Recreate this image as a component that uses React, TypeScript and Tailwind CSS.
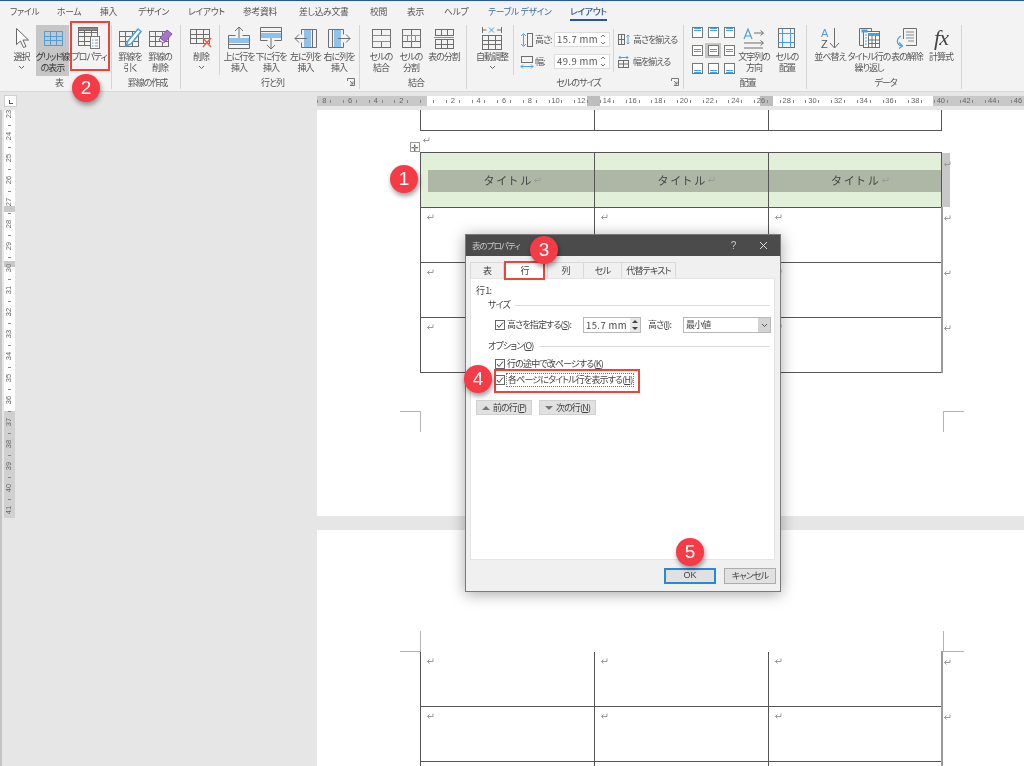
import type { ReactNode } from 'react'

const G = '#6e6e6e'
const B = '#4a9fdc'

function Ic({ w = 30, h = 26, children }: { w?: number; h?: number; children: ReactNode }) {
  return (
    <svg width={w} height={h} viewBox={`0 0 ${w} ${h}`} fill="none" stroke={G} strokeWidth={1} className="block">
      {children}
    </svg>
  )
}

// small table drawing used by most of the ribbon icons
function Lines({ x, y, w, h, cols = 3, rows = 3, stroke = G }: { x: number; y: number; w: number; h: number; cols?: number; rows?: number; stroke?: string }) {
  const parts = []
  for (let i = 1; i < cols; i++) {
    const cx = Math.round(x + (w * i) / cols) + 0.5
    parts.push(<line key={'c' + i} x1={cx} y1={y} x2={cx} y2={y + h} />)
  }
  for (let i = 1; i < rows; i++) {
    const cy = Math.round(y + (h * i) / rows) + 0.5
    parts.push(<line key={'r' + i} x1={x} y1={cy} x2={x + w} y2={cy} />)
  }
  return (
    <g stroke={stroke}>
      <rect x={x + 0.5} y={y + 0.5} width={w} height={h} />
      {parts}
    </g>
  )
}

const icons = {
  select: (
    <Ic w={20} h={24}>
      <path d="M4.500 2.500v16l4-3.500 3 6.500 2.500-1-3-6.500h5.500z" fill="#fff" stroke="#666" />
    </Ic>
  ),
  grid: (
    <Ic w={22} h={20}>
      <Lines x={2} y={3} w={18} h={14} cols={3} rows={3} stroke={B} />
    </Ic>
  ),
  props: (
    <Ic w={26} h={26}>
      <Lines x={2} y={2} w={19} h={18} cols={3} rows={4} />
      <rect x="2.500" y="2.500" width="19" height="3" fill="#8a8a8a" />
      <rect x="14.500" y="11.500" width="9" height="12" fill="#fff" stroke="#777" />
      <path d="M16 15h1.500M16 18h1.500M16 21h1.500" stroke={B} />
      <path d="M19 15h3M19 18h3M19 21h3" stroke="#888" />
    </Ic>
  ),
  draw: (
    <Ic w={26} h={24}>
      <Lines x={2} y={5} w={19} h={15} />
      <path d="M9 20l2-5L21 3l3 2.500L14 18z" fill="#fff" stroke={B} strokeWidth={1.5} />
    </Ic>
  ),
  erase: (
    <Ic w={26} h={24}>
      <Lines x={2} y={5} w={19} h={15} />
      <path d="M13 12l7-8 5 4-7 8z" fill="#a874c8" stroke="#8a55a8" />
      <path d="M13 12l-1 2 4 3 2-1z" fill="#fff" stroke="#8a55a8" />
    </Ic>
  ),
  del: (
    <Ic w={26} h={24}>
      <Lines x={2} y={3} w={19} h={14} />
      <path d="M15 12l8 9M23 12l-8 9" stroke="#e8604c" strokeWidth={1.4} />
    </Ic>
  ),
  above: (
    <Ic w={26} h={26}>
      <path d="M2.500 10.500h7M16.500 10.500h7M2.500 10.500v13h21v-13M2.500 19.500h21" />
      <rect x="3" y="13" width="20" height="5" fill="#8ec2ea" stroke="none" />
      <path d="M13 13V2M9 6l4-4 4 4" />
    </Ic>
  ),
  below: (
    <Ic w={26} h={26}>
      <path d="M2.500 15.500h7M16.500 15.500h7M2.500 15.500v-13h21v13M2.500 6.500h21" />
      <rect x="3" y="8" width="20" height="5" fill="#8ec2ea" stroke="none" />
      <path d="M13 13v11M9 20l4 4 4-4" />
    </Ic>
  ),
  left: (
    <Ic w={26} h={26}>
      <path d="M8.500 4.500h15v18h-15M19.500 4.500v18M8.500 4.500v5M8.500 17.500v5" />
      <rect x="11" y="5" width="7" height="17" fill="#8ec2ea" stroke="none" />
      <path d="M14 13.500H2M6 9.500l-4 4 4 4" />
    </Ic>
  ),
  right: (
    <Ic w={26} h={26}>
      <path d="M17.500 4.500h-15v18h15M6.500 4.500v18M17.500 4.500v5M17.500 17.500v5" />
      <rect x="8" y="5" width="7" height="17" fill="#8ec2ea" stroke="none" />
      <path d="M12 13.500h12M20 9.500l4 4-4 4" />
    </Ic>
  ),
  merge: (
    <Ic w={22} h={22}>
      <rect x="2.500" y="2.500" width="18" height="18" />
      <path d="M11.500 2.500v6M11.500 14.500v6" />
      <path d="M2.500 8.500h18M2.500 14.500h18" stroke={B} />
    </Ic>
  ),
  split: (
    <Ic w={22} h={22}>
      <rect x="2.500" y="2.500" width="18" height="18" />
      <path d="M11.500 2.500v18M2.500 14.500h18" />
      <path d="M2.500 8.500h18M7.500 8.500v6M11.500 8.500v6M15.500 8.500v6" stroke={B} />
    </Ic>
  ),
  splitTable: (
    <Ic w={22} h={22}>
      <Lines x={2} y={2} w={18} h={6} cols={3} rows={1} />
      <Lines x={2} y={12} w={18} h={9} cols={3} rows={2} />
      <path d="M1 10.500h20" stroke={B} />
    </Ic>
  ),
  autofit: (
    <Ic w={24} h={24}>
      <path d="M2.500 1v6M21.500 1v6M2.500 4h4M17 4h4" />
      <path d="M9 1.500l5 5M14 1.500l-5 5" stroke={B} />
      <Lines x={2} y={9} w={19} h={14} cols={3} rows={3} />
    </Ic>
  ),
  textDir: (
    <Ic w={24} h={24}>
      <path d="M2 13l4-10 4 10M3.500 10h5" stroke={B} strokeWidth={1.2} />
      <path d="M12 7h9M18.500 4.500l3 2.500-3 2.500M2 17h19M18.500 14.500l3 2.500-3 2.500M2 22h19" />
    </Ic>
  ),
  cellAlign: (
    <Ic w={22} h={24}>
      <rect x="2.500" y="2.500" width="16" height="19" />
      <path d="M6.500 2.500v19M14.500 2.500v19M2.500 7.500h16M2.500 16.500h16" stroke={B} />
    </Ic>
  ),
  sort: (
    <Ic w={24} h={24}>
      <text x="3" y="11" fontSize="11" fill={B} stroke="none" fontFamily="Liberation Sans">A</text>
      <text x="3" y="22" fontSize="11" fill="#555" stroke="none" fontFamily="Liberation Sans">Z</text>
      <path d="M16.500 2v20M12 17l4.500 5 4.500-5" />
    </Ic>
  ),
  repeat: (
    <Ic w={24} h={24}>
      <path d="M2.500 2.500h12v3M2.500 2.500v17h4" />
      <rect x="6.500" y="5.500" width="16" height="16" fill="#fff" />
      <rect x="4.500" y="3.500" width="6" height="3" fill={B} stroke="none" />
      <rect x="11" y="7" width="11" height="3" fill={B} stroke="none" />
      <path d="M11.500 10v11M15 10v11M18.500 10v11M11 14h11M11 17.500h11" />
      <path d="M8 9h2M8 12h2M8 15h2M8 18h2" stroke={B} />
    </Ic>
  ),
  convert: (
    <Ic w={24} h={24}>
      <path d="M8.500 13V2.500h13v17H11" />
      <path d="M11 6h8M11 9h8M11 12h8M13 15h6" stroke="#888" />
      <path d="M6 10c-5 3-5 9 1 10M4 16.500l3.500 3.500-3.500 2.500" stroke={B} strokeWidth={1.2} />
    </Ic>
  ),
  fx: (
    <div className="w-[26px] h-[24px] text-[22px] leading-[24px] italic text-[#444] text-center [font-family:'Liberation_Serif',serif]">fx</div>
  ),
  height: (
    <Ic w={14} h={16}>
      <path d="M3.500 2.500v11M1 4l2.500-2.500L6 4M1 12l2.500 2.500L6 12" stroke={B} />
      <rect x="7.500" y="1.500" width="5" height="13" />
    </Ic>
  ),
  width: (
    <Ic w={14} h={16}>
      <rect x="1.500" y="2.500" width="11" height="6" />
      <path d="M1 12.500h12M3 10.500l-2 2 2 2M11 10.500l2 2-2 2" stroke={B} />
    </Ic>
  ),
  sameH: (
    <Ic w={12} h={12}>
      <rect x="0.500" y="0.500" width="6" height="10" />
      <path d="M0.500 5.500h6M3.500 0.500v10" />
      <path d="M10 1v9M8.500 2.500l1.500-1.500 1.500 1.500M8.500 8.500l1.500 1.500 1.500-1.500" stroke={B} />
    </Ic>
  ),
  sameW: (
    <Ic w={12} h={12}>
      <rect x="0.500" y="4.500" width="10" height="7" />
      <path d="M5.500 4.500v7M0.500 8h10" />
      <path d="M1 1.500h9M2.500 0l-1.500 1.500 1.500 1.500M8.500 0l1.500 1.500-1.500 1.500" stroke={B} />
    </Ic>
  ),
}

function Btn({ icon, lines, className, chevron }: { icon: ReactNode; lines: string[]; className: string; chevron?: boolean }) {
  return (
    <div className={`flex flex-col items-center ${className}`}>
      <div className="h-[26px] flex items-center justify-center">{icon}</div>
      <div className="text-center leading-[11px] whitespace-nowrap">
        {lines.map((l) => (
          <div key={l}>{l}</div>
        ))}
      </div>
      {chevron && (
        <svg width="7" height="5" viewBox="0 0 7 5" fill="none" stroke="#666" className="mt-[3px]">
          <path d="M1 1l2.500 2.500L6 1" />
        </svg>
      )}
    </div>
  )
}

function Launcher() {
  return (
    <svg width="8" height="8" viewBox="0 0 8 8" fill="none" stroke="#777" className="absolute right-[4px] bottom-[3px]">
      <path d="M0.500 3V0.500H7.500V7.500H3M3 3l3 3M6 3.500V6H3.500" />
    </svg>
  )
}

function Group({ label, className, children, launcher }: { label: string; className: string; children: ReactNode; launcher?: boolean }) {
  return (
    <div className={`relative flex flex-col h-[64px] border-r border-[#d4d4d4] ${className}`}>
      <div className="flex-1 flex items-start">{children}</div>
      <div className="text-center leading-[12px] text-[#555]">{label}</div>
      {launcher && <Launcher />}
    </div>
  )
}

function Spin({ value }: { value: string }) {
  return (
    <div className="w-[56px] h-[15px] bg-white border border-[#dcdcdc] flex items-center text-[9.500px] pl-[2px] text-[#555] tracking-[0.4px]">
      <span className="flex-1">{value}</span>
      <svg width="8" height="13" viewBox="0 0 8 13" fill="none" stroke="#777" className="mr-[2px]">
        <path d="M2 4l2-2 2 2M2 9l2 2 2-2" />
      </svg>
    </div>
  )
}

function AlignCell({ bar, active }: { bar: string; active?: boolean }) {
  return (
    <div className={`w-[16px] h-[15px] flex items-center justify-center ${active ? 'bg-[#c6c6c6]' : ''}`}>
      <div className={`w-[11px] h-[11px] border border-[#777] bg-white flex flex-col px-[1px] ${bar}`}>
        <div className="h-[1px] w-full bg-[#4a9fdc]" />
        <div className="h-[1px] w-full bg-[#4a9fdc] mt-[1px]" />
      </div>
    </div>
  )
}

function Ribbon() {
  return (
    <div className="h-[70px] bg-[#f3f3f3] flex pt-[3px] text-[9px] tracking-[-1px] text-[#555] border-b border-[#d8d8d8]">
      <Group label="表" className="w-[112px] pl-[7px]">
        <Btn className="w-[29px]" icon={icons.select} lines={['選択']} chevron />
        <div className="w-[33px] h-[51px] bg-[#c6c6c6] text-[#333]">
          <Btn className="w-full" icon={icons.grid} lines={['グリッド線', 'の表示']} />
        </div>
        <Btn className="w-[40px]" icon={icons.props} lines={['プロパティ']} />
      </Group>
      <Group label="罫線の作成" className="w-[69px] pl-[3px]">
        <Btn className="w-[30px]" icon={icons.draw} lines={['罫線を', '引く']} />
        <Btn className="w-[30px]" icon={icons.erase} lines={['罫線の', '削除']} />
      </Group>
      <Group label="行と列" className="w-[179px] pl-[5px]" launcher>
        <Btn className="w-[30px]" icon={icons.del} lines={['削除']} chevron />
        <div className="w-px h-[50px] bg-[#d4d4d4] mx-[3px]" />
        <Btn className="w-[32px]" icon={icons.above} lines={['上に行を', '挿入']} />
        <Btn className="w-[32px]" icon={icons.below} lines={['下に行を', '挿入']} />
        <Btn className="w-[37px]" icon={icons.left} lines={['左に列を', '挿入']} />
        <Btn className="w-[30px]" icon={icons.right} lines={['右に列を', '挿入']} />
      </Group>
      <Group label="結合" className="w-[107px] pl-[6px]">
        <Btn className="w-[30px]" icon={icons.merge} lines={['セルの', '結合']} />
        <Btn className="w-[30px]" icon={icons.split} lines={['セルの', '分割']} />
        <Btn className="w-[36px]" icon={icons.splitTable} lines={['表の分割']} />
      </Group>
      <Group label="セルのサイズ" className="w-[217px] pl-[7px]" launcher>
        <Btn className="w-[36px]" icon={icons.autofit} lines={['自動調整']} chevron />
        <div className="w-px h-[50px] bg-[#d4d4d4] mx-[3px]" />
        <div className="w-[96px] flex flex-col gap-[7px] pt-[7px] pl-[3px]">
          <div className="flex items-center h-[15px]">
            {icons.height}
            <span className="w-[20px] pl-[1px]">高さ:</span>
            <Spin value="15.7 mm" />
          </div>
          <div className="flex items-center h-[15px]">
            {icons.width}
            <span className="w-[20px] pl-[1px]">幅:</span>
            <Spin value="49.9 mm" />
          </div>
        </div>
        <div className="w-px h-[43px] bg-[#d4d4d4] mt-[4px]" />
        <div className="flex flex-col gap-[10px] pt-[9px] pl-[4px]">
          <div className="flex items-center h-[12px] gap-[3px] whitespace-nowrap">{icons.sameH}高さを揃える</div>
          <div className="flex items-center h-[12px] gap-[3px] whitespace-nowrap">{icons.sameW}幅を揃える</div>
        </div>
      </Group>
      <Group label="配置" className="w-[123px] pl-[5px]">
        <div className="grid grid-cols-3 gap-y-[3px] w-[48px]">
          <AlignCell bar="justify-start" />
          <AlignCell bar="justify-start items-center" />
          <AlignCell bar="justify-start items-end" />
          <AlignCell bar="justify-center" />
          <AlignCell bar="justify-center items-center" active />
          <AlignCell bar="justify-center items-end" />
          <AlignCell bar="justify-end" />
          <AlignCell bar="justify-end items-center" />
          <AlignCell bar="justify-end items-end" />
        </div>
        <Btn className="w-[34px]" icon={icons.textDir} lines={['文字列の', '方向']} />
        <Btn className="w-[32px]" icon={icons.cellAlign} lines={['セルの', '配置']} />
      </Group>
      <Group label="データ" className="w-[155px] pl-[3px]">
        <Btn className="w-[40px]" icon={icons.sort} lines={['並べ替え']} />
        <Btn className="w-[38px]" icon={icons.repeat} lines={['タイトル行の', '繰り返し']} />
        <Btn className="w-[38px]" icon={icons.convert} lines={['表の解除']} />
        <Btn className="w-[30px]" icon={icons.fx} lines={['計算式']} />
      </Group>
    </div>
  )
}

const tabs = [
  { label: 'ファイル', w: 'w-[47px]' },
  { label: 'ホーム', w: 'w-[43px]' },
  { label: '挿入', w: 'w-[38px]' },
  { label: 'デザイン', w: 'w-[50px]' },
  { label: 'レイアウト', w: 'w-[55px]' },
  { label: '参考資料', w: 'w-[56px]' },
  { label: '差し込み文書', w: 'w-[71px]' },
  { label: '校閲', w: 'w-[37px]' },
  { label: '表示', w: 'w-[37px]' },
  { label: 'ヘルプ', w: 'w-[44px]' },
]

function TabBar() {
  return (
    <div className="h-[21px] bg-[#f3f3f3] flex items-center pl-[10px] text-[8.800px] tracking-[-0.3px] text-[#555] whitespace-nowrap pt-[1px]">
      {tabs.map((t) => (
        <span key={t.label} className={t.w}>
          {t.label}
        </span>
      ))}
      <span className="w-[82px] text-[#3b6ea8]">テーブル デザイン</span>
      <span className="text-[#2b579a] font-medium border-b-2 border-[#2b579a] leading-[14px] mt-[2px]">レイアウト</span>
    </div>
  )
}

const rulerNums = [8, 6, 4, 2, 0, 2, 4, 6, 8, 10, 12, 14, 16, 18, 20, 22, 24, 26, 28, 30, 32, 34, 36, 38, 40, 42, 44, 46]

function HRuler() {
  return (
    <div className="h-[18px] bg-[#e6e6e6] flex items-center">
      <div className="ml-[4px] w-[13px] h-[12px] bg-white border border-[#d0d0d0] flex items-end justify-center pb-[2px]">
        <div className="w-[4px] h-[4px] border-l border-b border-[#555]" />
      </div>
      <div className="ml-[300px] relative flex-1 h-[10px] overflow-hidden flex">
        <div className="w-[110px] bg-[#c8c8c8]" />
        <div className="w-[160px] bg-white" />
        <div className="w-[13px] bg-[#bdbdbd]" />
        <div className="w-[160px] bg-white" />
        <div className="w-[13px] bg-[#bdbdbd]" />
        <div className="w-[160px] bg-white" />
        <div className="flex-1 bg-[#c8c8c8]" />
        <div className="absolute inset-0 flex -ml-[6px]">
          {rulerNums.map((n, i) => (
            <div key={i} className="w-[25.700px] shrink-0 flex items-center text-[7.500px] leading-none text-[#666] [font-family:'Liberation_Sans',sans-serif]">
              <span className="w-[6.400px]" />
              <span className="w-px h-[3px] bg-[#888]" />
              <span className="w-[11.900px] text-center">{n === 0 ? '' : n}</span>
              <span className="w-px h-[3px] bg-[#888]" />
            </div>
          ))}
        </div>
      </div>
    </div>
  )
}

const vNums = Array.from({ length: 19 }, (_, i) => 23 + i)

function VRuler() {
  return (
    <div className="relative ml-[2px] w-[11px] h-[408px] bg-white overflow-hidden">
      <div className="absolute left-0 right-0 top-[301px] bottom-0 bg-[#d0d0d0]" />
      <div className="absolute left-0 right-0 top-[96px] h-[6px] bg-[#c8c8c8]" />
      <div className="absolute left-0 right-0 top-[151px] h-[6px] bg-[#c8c8c8]" />
      <div className="relative -mt-[4px]">
        {vNums.map((n) => (
          <div key={n} className="h-[22px] flex flex-col items-center justify-between">
            <span className="-rotate-90 text-[7.500px] leading-[16px] h-[16px] text-[#666] [font-family:'Liberation_Sans',sans-serif]">{n}</span>
            <span className="w-[3px] h-px bg-[#888] mb-[2px]" />
          </div>
        ))}
      </div>
    </div>
  )
}

function Ret({ className = '' }: { className?: string }) {
  return (
    <svg width="8" height="7" viewBox="0 0 8 7" fill="none" stroke="#9a9a9a" className={className}>
      <path d="M7 0.500V3.500H1.500M3.500 1.500l-2 2 2 2" />
    </svg>
  )
}

const cellCols = 'grid grid-cols-[174px_174px_173px] w-[522px]'

// the thick grey end-of-row edge on the right of each table row
function RowEnd() {
  return <div className="absolute left-[520px] -top-px bottom-0 w-[2px] bg-[#9a9a9a]" />
}

function Row({ marks = true }: { marks?: boolean }) {
  return (
    <div className={`relative ${cellCols} border-l border-[#555] h-[55px]`}>
      {[0, 1, 2].map((i) => (
        <div key={i} className="border-b border-r border-[#555] pt-[6px] pl-[5px]">
          {marks && <Ret />}
        </div>
      ))}
      <RowEnd />
      <Ret className="absolute left-[522px] top-[7px]" />
    </div>
  )
}

function HeaderRow() {
  return (
    <div className={`relative ${cellCols} border-l border-[#555] h-[55px] bg-[#e2efd9]`}>
      <div className="absolute left-[7px] w-[513px] top-[17px] h-[22px] bg-[#aeb6a6]" />
      {[0, 1, 2].map((i) => (
        <div key={i} className="relative border-b border-r border-[#555] flex items-center justify-center pl-[10px] pt-[1px] text-[11px] tracking-[3px] text-[#444]">
          タイトル
          <Ret className="-ml-[1px]" />
        </div>
      ))}
      <div className="absolute left-[521px] top-0 w-[8px] h-[54px] bg-[#c8c8c8]" />
      <Ret className="absolute left-[522px] top-[8px]" />
    </div>
  )
}

function Crop({ className }: { className: string }) {
  return <div className={`w-[21px] h-[21px] border-[#b4b4b4] ${className}`} />
}

function Doc() {
  return (
    <div className="flex">
      <div className="w-[317px] shrink-0 border-l-2 border-[#c4c4c4]">
        <VRuler />
      </div>
      <div className="flex-1">
        <div className="h-[406px] bg-white pl-[103px]">
          <div className={`${cellCols} border-l border-[#555] h-[21px]`}>
            {[0, 1, 2].map((i) => (
              <div key={i} className="border-r border-b border-[#555]" />
            ))}
          </div>
          <div className="relative h-[21px] pl-[2px] pt-[6px]">
            <Ret />
            <div className="absolute -left-[10px] top-[11px] w-[10px] h-[10px] border border-[#999] bg-white flex items-center justify-center text-[9px] leading-none text-[#444]">
              ✛
            </div>
          </div>
          <div className="w-[522px] border-t border-[#555]" />
          <HeaderRow />
          <Row />
          <Row />
          <Row />
          <div className="-ml-[20px] mt-[38px] flex w-[564px] justify-between">
            <Crop className="border-t border-r" />
            <Crop className="border-t border-l" />
          </div>
        </div>
        <div className="h-[14px]" />
        <div className="h-[236px] bg-white pl-[103px] pt-[101px] overflow-hidden">
          <div className="-ml-[20px] flex w-[564px] justify-between">
            <Crop className="border-b border-r" />
            <Crop className="border-b border-l" />
          </div>
          <Row />
          <Row />
          <Row marks={false} />
        </div>
      </div>
    </div>
  )
}

function Check() {
  return (
    <div className="w-[10px] h-[10px] border border-[#666] bg-white shrink-0 flex items-center justify-center">
      <svg width="8" height="8" viewBox="0 0 8 8" fill="none" stroke="#444" strokeWidth={1}>
        <path d="M1 4l2 2.500L7 1.500" />
      </svg>
    </div>
  )
}

function Dialog() {
  const tabsCls = 'h-[16px] flex items-center justify-center border-t border-r border-[#d9d9d9] bg-[#f0f0f0]'
  return (
    <div className="absolute left-[465px] top-[234px] w-[316px] h-[358px] bg-[#f0f0f0] border border-[#7a7a7a] shadow-[0_2px_14px_rgba(0,0,0,0.35)] text-[9px] tracking-[-0.85px] text-[#444]">
      <div className="h-[21px] bg-[#4b4b4b] flex items-center pl-[6px] text-[#c8c8c8] text-[8.500px] tracking-[-1px]">
        <span className="flex-1">表のプロパティ</span>
        <span className="w-[14px] text-center text-[10px] mr-[19px] [font-family:'Liberation_Sans',sans-serif]">?</span>
        <svg width="9" height="9" viewBox="0 0 9 9" stroke="#ddd" className="mr-[12px]">
          <path d="M1 1l7 7M8 1l-7 7" />
        </svg>
      </div>
      <div className="flex pl-[4px] mt-[6px] h-[16px]">
        <div className={`${tabsCls} w-[34px] border-l`}>表</div>
        <div className="h-[17px] w-[41px] flex items-center justify-center bg-white">行</div>
        <div className={`${tabsCls} w-[37px] ml-[2px] border-l`}>列</div>
        <div className={`${tabsCls} w-[38px]`}>セル</div>
        <div className={`${tabsCls} w-[54px]`}>代替テキスト</div>
      </div>
      <div className="mx-[4px] w-[305px] h-[282px] bg-white border border-[#e4e4e4] pt-[6px]">
        <div className="pl-[5px] h-[12px] leading-[12px]">行 1:</div>
        <div className="flex items-center pl-[17px] pr-[4px] h-[14px] mt-[1px] gap-[5px]">
          <span>サイズ</span>
          <div className="flex-1 h-px bg-[#dcdcdc]" />
        </div>
        <div className="flex items-center pl-[24px] h-[16px] mt-[5px]">
          <Check />
          <span className="w-[78px] pl-[2px] whitespace-nowrap">
            高さを指定する(<u>S</u>):
          </span>
          <div className="w-[58px] h-[16px] border border-[#b8b8b8] flex items-center pl-[2px] text-[9.500px] tracking-[0.4px]">
            <span className="flex-1">15.7 mm</span>
            <div className="w-[10px] h-full bg-[#e8e8e8] flex flex-col items-center justify-around">
              <div className="w-0 h-0 border-x-[3px] border-x-transparent border-b-[3px] border-b-[#444]" />
              <div className="w-0 h-0 border-x-[3px] border-x-transparent border-t-[3px] border-t-[#444]" />
            </div>
          </div>
          <span className="w-[42px] pl-[7px] whitespace-nowrap">
            高さ(<u>I</u>):
          </span>
          <div className="w-[88px] h-[16px] border border-[#b8b8b8] flex items-center pl-[2px]">
            <span className="flex-1">最小値</span>
            <div className="w-[12px] h-full bg-[#d4d4d4] flex items-center justify-center">
              <svg width="7" height="5" viewBox="0 0 7 5" fill="none" stroke="#555">
                <path d="M1 1l2.500 2.500L6 1" />
              </svg>
            </div>
          </div>
        </div>
        <div className="flex items-center pl-[17px] pr-[4px] h-[14px] mt-[6px] gap-[5px]">
          <span>
            オプション(<u>O</u>)
          </span>
          <div className="flex-1 h-px bg-[#dcdcdc]" />
        </div>
        <div className="flex items-center pl-[24px] h-[14px] mt-[4px] gap-[2px]">
          <Check />
          <span>
            行の途中で改ページする(<u>K</u>)
          </span>
        </div>
        <div className="flex items-center pl-[24px] h-[14px] mt-[2px] gap-[2px]">
          <Check />
          <span className="outline-1 outline-dotted outline-[#777] px-[1px] leading-[12px]">
            各ページにタイトル行を表示する(<u>H</u>)
          </span>
        </div>
        <div className="flex pl-[5px] mt-[13px] gap-[7px]">
          <div className="w-[56px] h-[15px] bg-[#e1e1e1] border border-[#d0d0d0] flex items-center justify-center gap-[3px]">
            <div className="w-0 h-0 border-x-[4px] border-x-transparent border-b-[4px] border-b-[#777]" />
            <span>
              前の行(<u>P</u>)
            </span>
          </div>
          <div className="w-[57px] h-[15px] bg-[#e1e1e1] border border-[#d0d0d0] flex items-center justify-center gap-[3px]">
            <div className="w-0 h-0 border-x-[4px] border-x-transparent border-t-[4px] border-t-[#777]" />
            <span>
              次の行(<u>N</u>)
            </span>
          </div>
        </div>
      </div>
      <div className="flex justify-end gap-[8px] pr-[4px] mt-[8px]">
        <div className="w-[52px] h-[16px] bg-[#e1e1e1] border-2 border-[#2b88d8] flex items-center justify-center tracking-normal [font-family:'Liberation_Sans',sans-serif]">
          OK
        </div>
        <div className="w-[52px] h-[16px] bg-[#e1e1e1] border border-[#adadad] flex items-center justify-center">キャンセル</div>
      </div>
    </div>
  )
}

function Badge({ n, className }: { n: number; className: string }) {
  return (
    <div className={`absolute w-[28px] h-[28px] rounded-full bg-[#f43b46] text-white flex items-center justify-center text-[19px] shadow-[1px_3px_5px_rgba(0,0,0,0.4)] [font-family:'Liberation_Sans',sans-serif] ${className}`}>
      {n}
    </div>
  )
}

export default function App() {
  return (
    <div className="relative w-[1024px] h-[766px] overflow-hidden bg-[#e6e6e6] blur-[0.3px] [font-family:'Noto_Sans_CJK_JP',sans-serif] [font-feature-settings:'palt']">
      <div className="h-[1px] bg-[#2b579a]" />
      <TabBar />
      <Ribbon />
      <HRuler />
      <Doc />
      <Dialog />
      {/* annotations drawn over the screenshot */}
      <div className="absolute left-[70px] top-[21px] w-[40px] h-[50px] border-2 border-[#e8453c]" />
      <div className="absolute left-[504px] top-[261px] w-[41px] h-[19px] border-2 border-[#e8453c]" />
      <div className="absolute left-[494px] top-[369px] w-[146px] h-[24px] border-2 border-[#e8453c]" />
      <Badge n={1} className="left-[390px] top-[165px]" />
      <Badge n={2} className="left-[72px] top-[74px]" />
      <Badge n={3} className="left-[530px] top-[236px]" />
      <Badge n={4} className="left-[464px] top-[365px]" />
      <Badge n={5} className="left-[676px] top-[538px]" />
    </div>
  )
}
